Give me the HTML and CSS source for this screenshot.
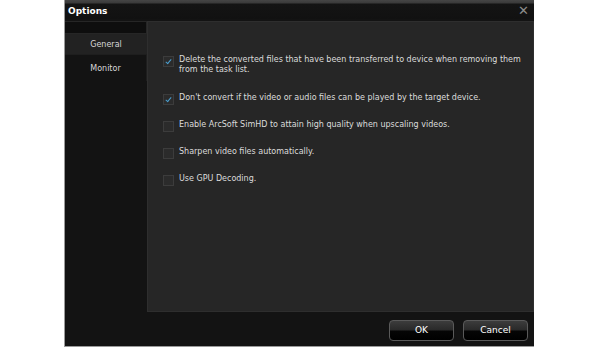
FILE: index.html
```html
<!DOCTYPE html>
<html lang="en">
<head>
    <meta charset="UTF-8">
    <title>Options</title>
    <link rel="stylesheet" href="styles.css">
</head>
<body>
    <div class="dialog">
        <!-- title bar -->
        <div class="titlebar">
            <span class="title">Options</span>
            <span class="close">&#x2715;</span>
        </div>

        <div class="content">
            <!-- left tabs -->
            <div class="sidebar">
                <div class="side-head"></div>
                <div class="tab active">General</div>
                <div class="tab">Monitor</div>
            </div>

            <div class="right">
                <div class="panel">
                    <label class="option">
                        <span class="check on"></span>
                        <span class="text">Delete the converted files that have been transferred to device when removing them from the task list.</span>
                    </label>
                    <label class="option">
                        <span class="check on"></span>
                        <span class="text">Don't convert if the video or audio files can be played by the target device.</span>
                    </label>
                    <label class="option">
                        <span class="check"></span>
                        <span class="text">Enable ArcSoft SimHD to attain high quality when upscaling videos.</span>
                    </label>
                    <label class="option">
                        <span class="check"></span>
                        <span class="text">Sharpen video files automatically.</span>
                    </label>
                    <label class="option">
                        <span class="check"></span>
                        <span class="text">Use GPU Decoding.</span>
                    </label>
                </div>

                <div class="footer">
                    <div class="btn">OK</div>
                    <div class="btn">Cancel</div>
                </div>
            </div>
        </div>
    </div>
</body>
</html>
```
FILE: styles.css
```css
body {
    margin: 0;
    background: #ffffff;
    font-family: "DejaVu Sans", "Liberation Sans", sans-serif;
}

.dialog {
    margin-left: 64px;
    width: 470px;
    height: 347px;
    background: #131313;
    border-left: 1px solid #9a9a9a;
    border-bottom: 1px solid #9a9a9a;
    display: flex;
    flex-direction: column;
    box-sizing: border-box;
}

/* title bar */
.titlebar {
    height: 19px;
    background: linear-gradient(#454545 0, #3a3a3a 3px, #141414 4px, #111111 100%);
    display: flex;
    align-items: center;
    justify-content: space-between;
    padding: 2px 5px 0 3px;
    box-sizing: border-box;
}

.title {
    color: #ffffff;
    font-family: "DejaVu Sans", sans-serif;
    font-weight: bold;
    font-size: 9px;
}

.close {
    color: #8c8c8c;
    font-size: 13px;
    line-height: 1;
}

.content {
    flex: 1;
    display: flex;
}

/* left tabs */
.sidebar {
    width: 82px;
    padding-top: 2px;
}

.side-head {
    height: 11px;
    background: #0e0e0e;
    border: 1px solid #262626;
    border-left: none;
}

.tab {
    color: #d8d8d8;
    font-size: 8px;
    text-align: center;
    height: 20px;
    line-height: 21px;
    margin-bottom: 4px;
}

.tab.active {
    background: #222222;
    margin-bottom: 0;
}

.tab:not(.active) {
    border-top: 1px solid #1e1e1e;
    border-right: 1px solid #1e1e1e;
    background: #131313;
    height: 26px;
    line-height: 27px;
}

.right {
    flex: 1;
    display: flex;
    flex-direction: column;
}

.panel {
    flex: 1;
    margin-top: 2px;
    background: #262626;
    border: 1px solid #2e2e2e;
    padding: 33px 12px 0 15px;
    display: flex;
    flex-direction: column;
    gap: 15px;
}

.option {
    display: flex;
    align-items: flex-start;
    gap: 5px;
    font-size: 8px;
    line-height: 10px;
    color: #dcdcdc;
}

.option:first-child {
    margin-bottom: 3px;
}

.check {
    flex: none;
    width: 9px;
    height: 9px;
    margin-top: 1px;
    background: #2b2b2b;
    border: 1px solid #3c3c3c;
    position: relative;
}

.check.on::after {
    content: "";
    position: absolute;
    left: 3px;
    top: 1px;
    width: 2px;
    height: 5px;
    border-right: 1.5px solid #4a9fd0;
    border-bottom: 1.5px solid #4a9fd0;
    transform: rotate(40deg);
}

.text {
    max-width: 352px;
}

/* buttons */
.footer {
    height: 34px;
    display: flex;
    justify-content: flex-end;
    align-items: center;
    gap: 9px;
    padding: 2px 6px 0 0;
    box-sizing: border-box;
}

.btn {
    width: 65px;
    height: 21px;
    box-sizing: border-box;
    border: 1px solid #5a5a5a;
    border-radius: 4px;
    background: linear-gradient(#3c3c3c 0%, #2a2a2a 45%, #050505 55%, #000000 100%);
    color: #ffffff;
    font-size: 9px;
    display: flex;
    align-items: center;
    justify-content: center;
}
```
